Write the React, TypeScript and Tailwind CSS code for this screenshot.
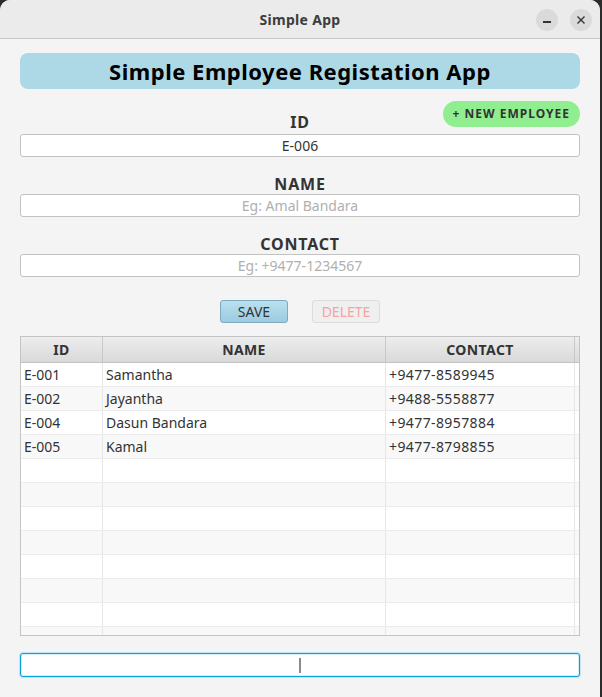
import React from "react";

const rows = [
  ["E-001", "Samantha", "+9477-8589945"],
  ["E-002", "Jayantha", "+9488-5558877"],
  ["E-004", "Dasun Bandara", "+9477-8957884"],
  ["E-005", "Kamal", "+9477-8798855"],
];

export default function App() {
  const allRows = Array.from({ length: 12 }, (_, i) => rows[i] ?? ["", "", ""]);
  return (
    <div
      className="w-[602px] h-[697px] bg-[#2b2b2b] overflow-hidden"
      style={{ fontFamily: '"Noto Sans", "Open Sans", sans-serif' }}
    >
      <div className="w-[600px] h-[697px] bg-[#f4f4f4] rounded-t-[10px] overflow-hidden flex flex-col">
        {/* title bar */}
        <div className="h-[39px] shrink-0 bg-[#ebebeb] border-b border-[#c9c9c9] flex items-center relative">
          <div className="flex-1 text-center text-[14px] font-bold text-[#3d3d3d] tracking-[0.3px]">Simple App</div>
          <div className="absolute right-[8px] top-[9px] flex gap-[12px]">
            <div className="w-[22px] h-[22px] rounded-full bg-[#dadada] flex items-center justify-center">
              <div className="w-[8px] h-[1.5px] bg-[#333] mt-[4px]" />
            </div>
            <div className="w-[22px] h-[22px] rounded-full bg-[#dadada] flex items-center justify-center">
              <svg width="10" height="10" viewBox="0 0 10 10">
                <path d="M1.5 1.5 L8.5 8.5 M8.5 1.5 L1.5 8.5" stroke="#333" strokeWidth="1.4" />
              </svg>
            </div>
          </div>
        </div>

        {/* content */}
        <div className="px-[20px] pt-[14px] flex flex-col">
          <div className="h-[36px] bg-[#add8e6] rounded-[8px] flex items-center justify-center text-[22px] font-bold text-black tracking-[0.5px]">
            Simple Employee Registation App
          </div>

          <div className="mt-[12px] h-[32px] grid grid-cols-[1fr_auto_1fr]">
            <div />
            <div className="self-end h-[21px] leading-[21px] text-[16px] font-bold text-[#333] tracking-[0.8px]">ID</div>
            <div className="justify-self-end self-start h-[26px] px-[10px] rounded-full bg-[#90ee90] flex items-center text-[12px] font-bold text-[#333] tracking-[1px]">
              + NEW EMPLOYEE
            </div>
          </div>
          <div className="mt-[1px] h-[23px] bg-white border border-[#c2c2c2] rounded-[3px] flex items-center justify-center text-[14px] text-[#333]">
            E-006
          </div>

          <div className="mt-[17px] h-[20px] leading-[20px] text-center text-[16px] font-bold text-[#333] tracking-[0.8px]">NAME</div>
          <div className="h-[23px] bg-white border border-[#c2c2c2] rounded-[3px] flex items-center justify-center text-[14px] text-[#b0b0b0]">
            Eg: Amal Bandara
          </div>

          <div className="mt-[17px] h-[20px] leading-[20px] text-center text-[16px] font-bold text-[#333] tracking-[0.8px]">CONTACT</div>
          <div className="h-[23px] bg-white border border-[#c2c2c2] rounded-[3px] flex items-center justify-center text-[14px] text-[#b0b0b0]">
            Eg: +9477-1234567
          </div>

          <div className="mt-[23px] flex justify-center gap-[24px]">
            <div className="w-[68px] h-[23px] rounded-[3px] border border-[#7fa9c0] bg-gradient-to-b from-[#b9e0ef] to-[#9dcbe0] flex items-center justify-center text-[14px] text-[#333]">
              SAVE
            </div>
            <div className="w-[68px] h-[23px] rounded-[3px] border border-[#dcdcdc] bg-[#efefef] flex items-center justify-center text-[14px] text-[#f5a3a3]">
              DELETE
            </div>
          </div>

          {/* table */}
          <div className="mt-[13px] h-[300px] border border-[#c4c4c4] bg-white overflow-hidden flex flex-col">
            <div className="h-[26px] shrink-0 grid grid-cols-[82px_283px_189px_1fr] border-b border-[#c4c4c4] bg-gradient-to-b from-[#ededed] to-[#d9d9d9] text-[14px] font-bold text-[#333] tracking-[0.4px]">
              <div className="border-r border-[#c8c8c8] flex items-center justify-center">ID</div>
              <div className="border-r border-[#c8c8c8] flex items-center justify-center">NAME</div>
              <div className="border-r border-[#c8c8c8] flex items-center justify-center">CONTACT</div>
              <div />
            </div>
            {allRows.map((r, i) => (
              <div
                key={i}
                className={`h-[24px] shrink-0 grid grid-cols-[82px_283px_189px_1fr] border-b border-[#ececec] text-[14px] text-[#333] ${
                  i % 2 === 0 ? "bg-white" : "bg-[#f8f8f8]"
                }`}
              >
                <div className="border-r border-[#e6e6e6] pl-[3px] flex items-center">{r[0]}</div>
                <div className="border-r border-[#e6e6e6] pl-[3px] flex items-center">{r[1]}</div>
                <div className="border-r border-[#e6e6e6] pl-[3px] flex items-center tracking-[0.4px]">{r[2]}</div>
                <div />
              </div>
            ))}
          </div>

          <div className="mt-[17px] h-[24px] bg-white border border-[#0a9fd6] rounded-[3px] shadow-[0_0_0_1px_#bfe5f3,inset_0_0_0_1px_#d8f0f8] flex items-center justify-center">
            <div className="w-[2px] h-[15px] bg-[#8a8a8a]" />
          </div>
        </div>
      </div>
    </div>
  );
}
